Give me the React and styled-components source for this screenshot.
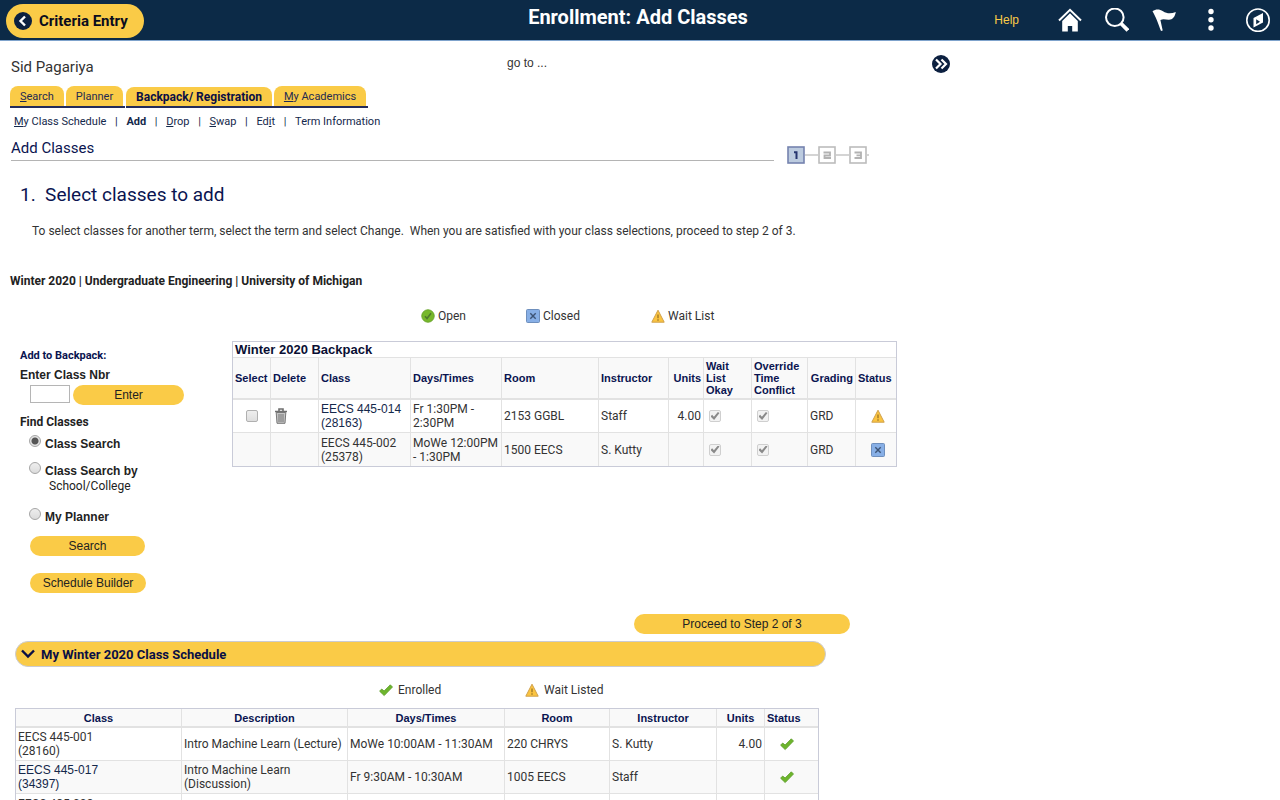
import { useState } from "react";
import styled, { createGlobalStyle, css } from "styled-components";

const backpack = [
  {
    name: "EECS 445-014",
    nbr: "(28163)",
    linked: true,
    time: "Fr 1:30PM - 2:30PM",
    room: "2153 GGBL",
    instructor: "Staff",
    units: "4.00",
    status: "wait",
  },
  {
    name: "EECS 445-002",
    nbr: "(25378)",
    linked: false,
    time: "MoWe 12:00PM - 1:30PM",
    room: "1500 EECS",
    instructor: "S. Kutty",
    units: "",
    status: "closed",
  },
];

const schedule = [
  {
    name: "EECS 445-001",
    nbr: "(28160)",
    linked: false,
    desc: "Intro Machine Learn (Lecture)",
    time: "MoWe 10:00AM - 11:30AM",
    room: "220 CHRYS",
    instructor: "S. Kutty",
    units: "4.00",
  },
  {
    name: "EECS 445-017",
    nbr: "(34397)",
    linked: true,
    desc: "Intro Machine Learn (Discussion)",
    time: "Fr 9:30AM - 10:30AM",
    room: "1005 EECS",
    instructor: "Staff",
    units: "",
  },
  {
    name: "EECS 485-002",
    nbr: "(26092)",
    linked: false,
    desc: "Web Systems (Lecture)",
    time: "MoWe 3:00PM - 4:30PM",
    room: "1670 BBB",
    instructor: "Staff",
    units: "4.00",
  },
];

const backpackCols = [38, 48, 92, 91, 97, 70, 35, 48, 56, 48, 40];
const scheduleCols = [166, 166, 157, 105, 107, 48, 53];

const HomeIcon = () => (
  <svg width="24" height="24" viewBox="0 0 24 24" fill="#fff">
    <path d="M1 12.500 12 1.800l11 10.700" fill="none" stroke="#fff" strokeWidth="2" />
    <path d="M12 5.200 4.200 13v10.500h5.600V18h4.400v5.500h5.600V13z" />
  </svg>
);
const SearchIcon = () => (
  <svg width="24" height="24" viewBox="0 0 24 24" fill="none" stroke="#fff">
    <circle cx="9.800" cy="9.300" r="8.800" strokeWidth="2" />
    <path d="m16 15.500 6.900 6.900" strokeWidth="3.800" />
  </svg>
);
const FlagIcon = () => (
  <svg width="24" height="24" viewBox="0 0 24 24" fill="#fff">
    <path d="M.5 3.200C4 .8 7.500 1 11 3.300c4 2.500 8 2.600 12.800.7-.6 4.500-3.200 7.600-6.800 7.800-3 .2-5.200-1.500-8.600.2l2.300 10.400-1.700.6C6.500 16 3.500 8 .5 3.200z" />
  </svg>
);
const DotsIcon = () => (
  <svg width="24" height="24" viewBox="0 0 24 24" fill="#fff">
    <circle cx="12" cy="3.500" r="2.700" />
    <circle cx="12" cy="11.700" r="2.700" />
    <circle cx="12" cy="20" r="2.700" />
  </svg>
);
const CompassIcon = () => (
  <svg width="24" height="24" viewBox="0 0 24 24">
    <circle cx="12" cy="12.200" r="11.200" fill="none" stroke="#fff" strokeWidth="1.600" />
    <path d="M7.500 10 17 5v9.500L7.500 19.500z" fill="#fff" />
    <path d="m10.200 11.300 3.800 2.400-3.800 2.600z" fill="#0c2a47" />
  </svg>
);
const BackIcon = () => (
  <svg width="18" height="18" viewBox="0 0 18 18">
    <circle cx="9" cy="9" r="9" fill="#0c2040" />
    <path d="M11 4.500 6.500 9l4.500 4.500" fill="none" stroke="#fff" strokeWidth="2.400" />
  </svg>
);
const GoIcon = () => (
  <svg width="18" height="18" viewBox="0 0 18 18">
    <circle cx="9" cy="9" r="9" fill="#0c2040" />
    <path d="m4 4.500 4.500 4.500L4 13.500M9.500 4.500 14 9l-4.500 4.500" fill="none" stroke="#fff" strokeWidth="2.200" />
  </svg>
);
const OpenIcon = () => (
  <svg width="14" height="14" viewBox="0 0 14 14">
    <circle cx="7" cy="7" r="6.200" fill="#76b82a" stroke="#6aa52c" />
    <path d="m4 7.300 2 2.300L10 4.300" fill="none" stroke="#4f7a2c" strokeWidth="1.600" />
  </svg>
);
const ClosedIcon = () => (
  <svg width="14" height="14" viewBox="0 0 14 14">
    <rect x=".5" y=".5" width="13" height="13" rx="1" fill="#87afe6" stroke="#6e8fbd" />
    <path d="m4.300 4.300 5.400 5.400m0-5.400L4.300 9.700" stroke="#3d5476" strokeWidth="1.400" />
  </svg>
);
const WaitIcon = () => (
  <svg width="14" height="14" viewBox="0 0 14 14">
    <path d="M7 1.200 13.200 13.200H.8z" fill="#fbc440" stroke="#cfa04a" strokeLinejoin="round" />
    <path d="M7 5.500v3.700M7 10.300v1.400" stroke="#a17a28" strokeWidth="1.400" />
  </svg>
);
const EnrolledIcon = () => (
  <svg width="14" height="14" viewBox="0 0 14 14">
    <path d="m.6 8.200 2.100-2.200 2.400 2 6.200-6.200 2.200 2.200L5.200 12.600z" fill="#6db52c" stroke="#5a9a28" strokeWidth=".8" strokeLinejoin="round" />
  </svg>
);
const TrashIcon = () => (
  <svg width="14" height="16" viewBox="0 0 14 16">
    <path d="M1 3.500h12M5 2.800V1h4v1.800" fill="none" stroke="#6f6f6f" strokeWidth="1.600" />
    <path d="M2.200 4.500h9.600L11 15.300H3z" fill="#c4c4c4" stroke="#777" />
    <path d="M5 6v8M7 6v8M9 6v8" stroke="#777" />
  </svg>
);
const ChevronIcon = () => (
  <svg width="14" height="10" viewBox="0 0 14 10">
    <path d="m1 1.500 6 6 6-6" fill="none" stroke="#0a0f45" strokeWidth="2.400" />
  </svg>
);
// step 1 is the current one, the others are greyed out
const StepsIcon = () => (
  <svg width="82" height="18" viewBox="0 0 82 18" role="img" aria-label="Step 1 of 3">
    <path d="M18 9h13M49 9h13M80 9h2" stroke="#a9a9a9" />
    <rect x="1" y="1" width="16" height="16" fill="#bccbdf" stroke="#7583ae" strokeWidth="1.600" />
    <rect x="32" y="1" width="16" height="16" fill="#fff" stroke="#bcbcbc" strokeWidth="1.600" />
    <rect x="63" y="1" width="16" height="16" fill="#fff" stroke="#bcbcbc" strokeWidth="1.600" />
    <path d="M7 6.200h2.500V13" fill="none" stroke="#26356f" strokeWidth="2" />
    <path d="M36.500 6.500h6.500v3h-5.500v2.500h6.500M67.500 6.500H74v5.500h-6.500M69.500 9.300H74" fill="none" stroke="#b2b2b2" strokeWidth="1.800" />
  </svg>
);

const App = () => {
  const [method, setMethod] = useState("class");
  const [nbr, setNbr] = useState("");
  const [open, setOpen] = useState(true);

  return (
    <StyledPage>
      <GlobalStyle />
      <StyledHeader>
        <StyledBack type="button">
          <BackIcon />
          Criteria Entry
        </StyledBack>
        <StyledTitle>Enrollment: Add Classes</StyledTitle>
        <StyledTools>
          <StyledHelp href="#help">Help</StyledHelp>
          <StyledIconButton aria-label="Home"><HomeIcon /></StyledIconButton>
          <StyledIconButton aria-label="Search"><SearchIcon /></StyledIconButton>
          <StyledIconButton aria-label="Notifications"><FlagIcon /></StyledIconButton>
          <StyledIconButton aria-label="Actions"><DotsIcon /></StyledIconButton>
          <StyledIconButton aria-label="Navigator"><CompassIcon /></StyledIconButton>
        </StyledTools>
      </StyledHeader>

      <StyledMain>
        <StyledTopRow>
          <StyledName>Sid Pagariya</StyledName>
          <StyledGoTo>go to ...</StyledGoTo>
          <StyledGoButton aria-label="Go"><GoIcon /></StyledGoButton>
        </StyledTopRow>

        <StyledTabs>
          <StyledTab><a href="#search"><u>S</u>earch</a></StyledTab>
          <StyledTab><a href="#planner">Planner</a></StyledTab>
          <StyledTab $active><a href="#backpack">Backpack/ Registration</a></StyledTab>
          <StyledTab><a href="#academics"><u>M</u>y Academics</a></StyledTab>
        </StyledTabs>

        <StyledSubNav>
          <a href="#schedule"><u>M</u>y Class Schedule</a>
          <span>|</span>
          <b>Add</b>
          <span>|</span>
          <a href="#drop"><u>D</u>rop</a>
          <span>|</span>
          <a href="#swap"><u>S</u>wap</a>
          <span>|</span>
          <a href="#edit">Ed<u>i</u>t</a>
          <span>|</span>
          <a href="#term">Term Information</a>
        </StyledSubNav>

        <StyledHeadingRow>
          <StyledHeading>Add Classes</StyledHeading>
          <StepsIcon />
        </StyledHeadingRow>

        <StyledStepTitle>1.&nbsp; Select classes to add</StyledStepTitle>
        <StyledIntro>
          To select classes for another term, select the term and select Change.&nbsp; When you are
          satisfied with your class selections, proceed to step 2 of 3.
        </StyledIntro>
        <StyledTerm>Winter 2020 | Undergraduate Engineering | University of Michigan</StyledTerm>

        <StyledLegend>
          <StyledKey $w={105}><OpenIcon />Open</StyledKey>
          <StyledKey $w={125}><ClosedIcon />Closed</StyledKey>
          <StyledKey><WaitIcon />Wait List</StyledKey>
        </StyledLegend>

        <StyledColumns>
          <StyledSide>
            <StyledSideTitle>Add to Backpack:</StyledSideTitle>
            <StyledSideLabel htmlFor="nbr">Enter Class Nbr</StyledSideLabel>
            <StyledEntry>
              <StyledInput id="nbr" type="text" value={nbr} onChange={(e) => setNbr(e.target.value)} />
              <StyledButton type="button" $w={111}>Enter</StyledButton>
            </StyledEntry>
            <StyledFind>
              <legend>Find Classes</legend>
              <StyledOption>
                <input type="radio" name="find" checked={method === "class"} onChange={() => setMethod("class")} />
                <span>Class Search</span>
              </StyledOption>
              <StyledOption>
                <input type="radio" name="find" checked={method === "school"} onChange={() => setMethod("school")} />
                <span>
                  Class Search by
                  <small>School/College</small>
                </span>
              </StyledOption>
              <StyledOption>
                <input type="radio" name="find" checked={method === "planner"} onChange={() => setMethod("planner")} />
                <span>My Planner</span>
              </StyledOption>
            </StyledFind>
            <StyledStack>
              <StyledButton type="button" $w={115}>Search</StyledButton>
              <StyledButton type="button" $w={116}>Schedule Builder</StyledButton>
            </StyledStack>
          </StyledSide>

          <StyledTable>
            <colgroup>
              {backpackCols.map((w, i) => <StyledCol key={i} $w={w} />)}
            </colgroup>
            <thead>
              <tr>
                <StyledTableTitle colSpan={backpackCols.length}>Winter 2020 Backpack</StyledTableTitle>
              </tr>
              <StyledHeadRow $tall>
                <th>Select</th>
                <th>Delete</th>
                <th>Class</th>
                <th>Days/Times</th>
                <th>Room</th>
                <th>Instructor</th>
                <StyledTh $align="right">Units</StyledTh>
                <th>Wait List Okay</th>
                <th>Override Time Conflict</th>
                <StyledTh $align="right">Grading</StyledTh>
                <th>Status</th>
              </StyledHeadRow>
            </thead>
            <tbody>
              {backpack.map((row) => (
                <StyledRow key={row.name}>
                  <td>
                    {row.linked && <StyledCheck $center aria-label={`Select ${row.name}`} />}
                  </td>
                  <StyledTd $inset={3}>
                    {row.linked && (
                      <StyledIconButton aria-label={`Delete ${row.name}`}><TrashIcon /></StyledIconButton>
                    )}
                  </StyledTd>
                  <td>
                    <ClassName row={row} />
                  </td>
                  <td>{row.time}</td>
                  <td>{row.room}</td>
                  <td>{row.instructor}</td>
                  <StyledTd $align="right">{row.units}</StyledTd>
                  <StyledTd $inset={5}><StyledCheck aria-label="Wait list okay" defaultChecked disabled /></StyledTd>
                  <StyledTd $inset={5}><StyledCheck aria-label="Override time conflict" defaultChecked disabled /></StyledTd>
                  <td>GRD</td>
                  <StyledTd $inset={15}>{row.status === "wait" ? <WaitIcon /> : <ClosedIcon />}</StyledTd>
                </StyledRow>
              ))}
            </tbody>
          </StyledTable>
        </StyledColumns>

        <StyledProceed>
          <StyledButton type="button" $w={216}>Proceed to Step 2 of 3</StyledButton>
        </StyledProceed>

        <StyledBar type="button" aria-expanded={open} onClick={() => setOpen(!open)}>
          <ChevronIcon />
          My Winter 2020 Class Schedule
        </StyledBar>

        {open && (
          <StyledSchedule>
            <StyledLegend $schedule>
              <StyledKey $w={146} $wide><EnrolledIcon />Enrolled</StyledKey>
              <StyledKey $wide><WaitIcon />Wait Listed</StyledKey>
            </StyledLegend>
            <StyledTable>
              <colgroup>
                {scheduleCols.map((w, i) => <StyledCol key={i} $w={w} />)}
              </colgroup>
              <thead>
                <StyledHeadRow>
                  <StyledTh $align="center">Class</StyledTh>
                  <StyledTh $align="center">Description</StyledTh>
                  <StyledTh $align="center">Days/Times</StyledTh>
                  <StyledTh $align="center">Room</StyledTh>
                  <StyledTh $align="center">Instructor</StyledTh>
                  <StyledTh $align="center">Units</StyledTh>
                  <th>Status</th>
                </StyledHeadRow>
              </thead>
              <tbody>
                {schedule.map((row) => (
                  <StyledRow key={row.name}>
                    <td>
                      <ClassName row={row} />
                    </td>
                    <td>{row.desc}</td>
                    <td>{row.time}</td>
                    <td>{row.room}</td>
                    <td>{row.instructor}</td>
                    <StyledTd $align="right">{row.units}</StyledTd>
                    <StyledTd $inset={15}><EnrolledIcon /></StyledTd>
                  </StyledRow>
                ))}
              </tbody>
            </StyledTable>
          </StyledSchedule>
        )}
      </StyledMain>
    </StyledPage>
  );
};

const ClassName = ({ row }) =>
  row.linked ? (
    <StyledClassLink href="#class">
      {row.name}
      <br />
      {row.nbr}
    </StyledClassLink>
  ) : (
    <>
      {row.name}
      <br />
      {row.nbr}
    </>
  );

const arial = `"Liberation Sans", Arial, sans-serif`;
const navy = "#0a1450";
const maize = "#facb47";

const GlobalStyle = createGlobalStyle`
  * {
    box-sizing: border-box;
  }
  body {
    margin: 0;
    background: #fff;
    color: #333;
    font-family: Roboto, sans-serif;
    font-size: 12px;
    line-height: 14px;
  }
  button, input {
    font-family: inherit;
    margin: 0;
  }
  svg {
    display: block;
  }
`;
const StyledPage = styled.div`
  height: 100vh;
  overflow: hidden;
`;
const StyledHeader = styled.header`
  display: grid;
  grid-template-columns: 1fr auto 1fr;
  align-items: center;
  height: 41px;
  padding: 0 10px 0 6px;
  background: #0c2a47;
  border-bottom: 1px solid #7fa3cc;
`;
const StyledBack = styled.button`
  display: flex;
  align-items: center;
  justify-self: start;
  gap: 7px;
  height: 34px;
  margin-top: 2px;
  padding: 0 16px 0 8px;
  border: none;
  border-radius: 17px;
  background: ${maize};
  color: #0b0b1e;
  font-size: 15px;
  font-weight: bold;
  cursor: pointer;
`;
const StyledTitle = styled.h1`
  margin: 0;
  padding-bottom: 6px;
  color: #fff;
  font-size: 20px;
  line-height: 24px;
`;
const StyledTools = styled.div`
  display: flex;
  align-items: center;
  justify-content: flex-end;
  gap: 23px;
`;
const StyledHelp = styled.a`
  margin-right: 16px;
  color: ${maize};
  font-family: ${arial};
  text-decoration: none;
`;
const StyledIconButton = styled.button`
  display: block;
  padding: 0;
  border: none;
  background: none;
  cursor: pointer;
`;
const StyledGoButton = styled(StyledIconButton)`
  padding-top: 2px;
`;
const StyledMain = styled.main`
  max-width: 960px;
`;
const StyledTopRow = styled.div`
  display: grid;
  grid-template-columns: 496px 425px auto;
  justify-content: start;
  align-items: start;
  height: 45px;
  padding: 12px 11px 0;
  line-height: 20px;
`;
const StyledName = styled.span`
  padding-top: 4px;
  font-size: 15px;
`;
const StyledGoTo = styled.span`
  font-family: ${arial};
`;
const StyledTabs = styled.ul`
  display: flex;
  align-items: flex-end;
  margin: 0;
  padding: 0 10px;
  list-style: none;
`;
const StyledTab = styled.li`
  padding-right: 2px;
  border-bottom: 2px solid #232c5c;
  a {
    display: block;
    padding: 2px 10px 0;
    border-radius: 8px 8px 0 0;
    background: ${maize};
    color: #1f2a52;
    font-size: 11px;
    line-height: 18px;
    text-decoration: none;
  }
  ${({ $active }) =>
    $active &&
    css`
      margin-left: 1px;
      a {
        padding-top: 1px;
        color: #0a0f45;
        font-size: 12px;
        font-weight: bold;
      }
    `}
`;
const StyledSubNav = styled.nav`
  display: flex;
  gap: 8px;
  padding: 6px 14px 4px;
  color: #14284b;
  font-size: 11px;
  line-height: 16px;
  a {
    color: inherit;
    text-decoration: none;
  }
  span {
    width: 4px;
    text-align: center;
  }
`;
const StyledHeadingRow = styled.div`
  display: flex;
  align-items: flex-end;
  gap: 13px;
  height: 30px;
  padding: 0 91px 0 11px;
`;
const StyledHeading = styled.h2`
  flex: 1;
  align-self: flex-start;
  margin: 0;
  padding-top: 2px;
  border-bottom: 1px solid #b4b4b4;
  color: ${navy};
  font-size: 15px;
  font-weight: normal;
  line-height: 24px;
`;
const StyledStepTitle = styled.h3`
  margin: 0;
  padding: 19px 20px 0;
  color: ${navy};
  font-size: 19px;
  font-weight: normal;
  line-height: 24px;
`;
const StyledIntro = styled.p`
  margin: 0;
  padding: 16px 32px 0;
  line-height: 16px;
`;
const StyledTerm = styled.p`
  margin: 0;
  padding: 34px 10px 0;
  color: #222;
  font-weight: bold;
  line-height: 16px;
`;
const StyledLegend = styled.div`
  display: flex;
  padding: ${({ $schedule }) => ($schedule ? "15px 0 10px 364px" : "19px 0 17px 421px")};
  line-height: 16px;
`;
const StyledKey = styled.span`
  display: flex;
  align-items: center;
  gap: ${({ $wide }) => ($wide ? 5 : 3)}px;
  width: ${({ $w }) => ($w ? `${$w}px` : "auto")};
`;
const StyledColumns = styled.div`
  display: grid;
  grid-template-columns: 212px auto;
  justify-content: start;
  align-items: start;
  padding-left: 20px;
`;
const StyledSide = styled.div`
  padding-top: 7px;
  color: #222;
`;
const StyledSideTitle = styled.h4`
  margin: 0;
  color: ${navy};
  font-size: 11px;
  line-height: 16px;
`;
const StyledSideLabel = styled.label`
  display: block;
  padding-top: 3px;
  font-family: ${arial};
  font-weight: bold;
  line-height: 16px;
`;
const StyledEntry = styled.div`
  display: flex;
  align-items: flex-start;
  gap: 3px;
  padding: 2px 0 0 10px;
`;
const StyledInput = styled.input`
  width: 40px;
  height: 18px;
  padding: 1px 3px;
  border: 1px solid #b5b5b5;
`;
const StyledButton = styled.button`
  width: ${({ $w }) => $w}px;
  height: 20px;
  padding: 0;
  border: none;
  border-radius: 10px;
  background: ${maize};
  color: #222;
  font-family: ${arial};
  font-size: 12px;
  cursor: pointer;
`;
const StyledFind = styled.fieldset`
  margin: 0;
  padding: 0;
  border: none;
  font-weight: bold;
  legend {
    padding: 9px 0 5px;
    line-height: 16px;
  }
`;
const StyledOption = styled.label`
  display: flex;
  align-items: flex-start;
  gap: 4px;
  padding: 0 0 10px 9px;
  font-family: ${arial};
  line-height: 16px;
  span {
    padding-top: 1px;
  }
  small {
    display: block;
    padding: 0 0 5px 4px;
    font-family: Roboto, sans-serif;
    font-size: 12px;
    font-weight: normal;
    line-height: 14px;
  }
  input {
    appearance: none;
    width: 12px;
    height: 12px;
    border: 1px solid #a5a5a5;
    border-radius: 50%;
    background: linear-gradient(#eee, #dcdcdc);
  }
  input:checked {
    background: radial-gradient(circle, #555 0 3px, #e4e4e4 4px);
  }
`;
const StyledStack = styled.div`
  display: flex;
  flex-direction: column;
  gap: 17px;
  padding: 1px 0 0 10px;
`;
const StyledTable = styled.table`
  width: min-content;
  table-layout: fixed;
  border: 1px solid #c9cbd8;
  border-collapse: separate;
  border-spacing: 0;
  th,
  td {
    padding: 0 2px;
    border-right: 1px solid #e2e2e2;
    text-align: left;
  }
  th:last-child,
  td:last-child {
    border-right: none;
  }
`;
const StyledCol = styled.col`
  width: ${({ $w }) => $w}px;
`;
const StyledTableTitle = styled.th`
  border-bottom: 1px solid #e2e2e2;
  color: #0a0f33;
  font-family: ${arial};
  font-size: 13px;
  line-height: 15px;
`;
const StyledHeadRow = styled.tr`
  height: ${({ $tall }) => ($tall ? 42 : 19)}px;
  background: #f9f9f9;
  th {
    border-bottom: 2px solid #e2e2e2;
    color: ${navy};
    font-family: ${arial};
    font-size: 11px;
    line-height: 12px;
  }
`;
const StyledTh = styled.th`
  && {
    text-align: ${({ $align }) => $align};
  }
`;
const StyledRow = styled.tr`
  height: 33px;
  &:nth-child(even) {
    background: #f9f9f9;
  }
  td {
    border-bottom: 1px solid #e2e2e2;
  }
  &:last-child td {
    border-bottom: none;
  }
`;
const StyledTd = styled.td`
  && {
    text-align: ${({ $align }) => $align || "left"};
    padding-left: ${({ $inset }) => $inset || 2}px;
  }
`;
const StyledClassLink = styled.a`
  color: #14284b;
  font-family: ${arial};
  text-decoration: none;
`;
const StyledCheck = styled.input.attrs({ type: "checkbox" })`
  appearance: none;
  display: grid;
  place-items: center;
  width: 12px;
  height: 12px;
  margin: ${({ $center }) => ($center ? "0 auto" : "0")};
  border: 1px solid #b0b0b0;
  border-radius: 2px;
  background: linear-gradient(#eee, #dedede);
  &:disabled {
    border-color: #cfcfcf;
    background: #f2f2f2;
  }
  &:checked::before {
    content: "";
    width: 9px;
    height: 8px;
    background: #8a8a8a;
    clip-path: polygon(0 55%, 18% 35%, 38% 60%, 82% 0, 100% 14%, 40% 100%);
  }
`;
const StyledProceed = styled.div`
  display: flex;
  padding: 21px 0 7px 634px;
`;
const StyledBar = styled.button`
  display: flex;
  align-items: center;
  gap: 6px;
  width: calc(100% - 149px);
  height: 26px;
  margin-left: 15px;
  padding: 0 5px;
  border: 1px solid #cacbd2;
  border-radius: 13px;
  background: ${maize};
  color: #0a0f45;
  font-size: 13px;
  font-weight: bold;
  cursor: pointer;
`;
const StyledSchedule = styled.section`
  padding-left: 15px;
`;

export default App;
